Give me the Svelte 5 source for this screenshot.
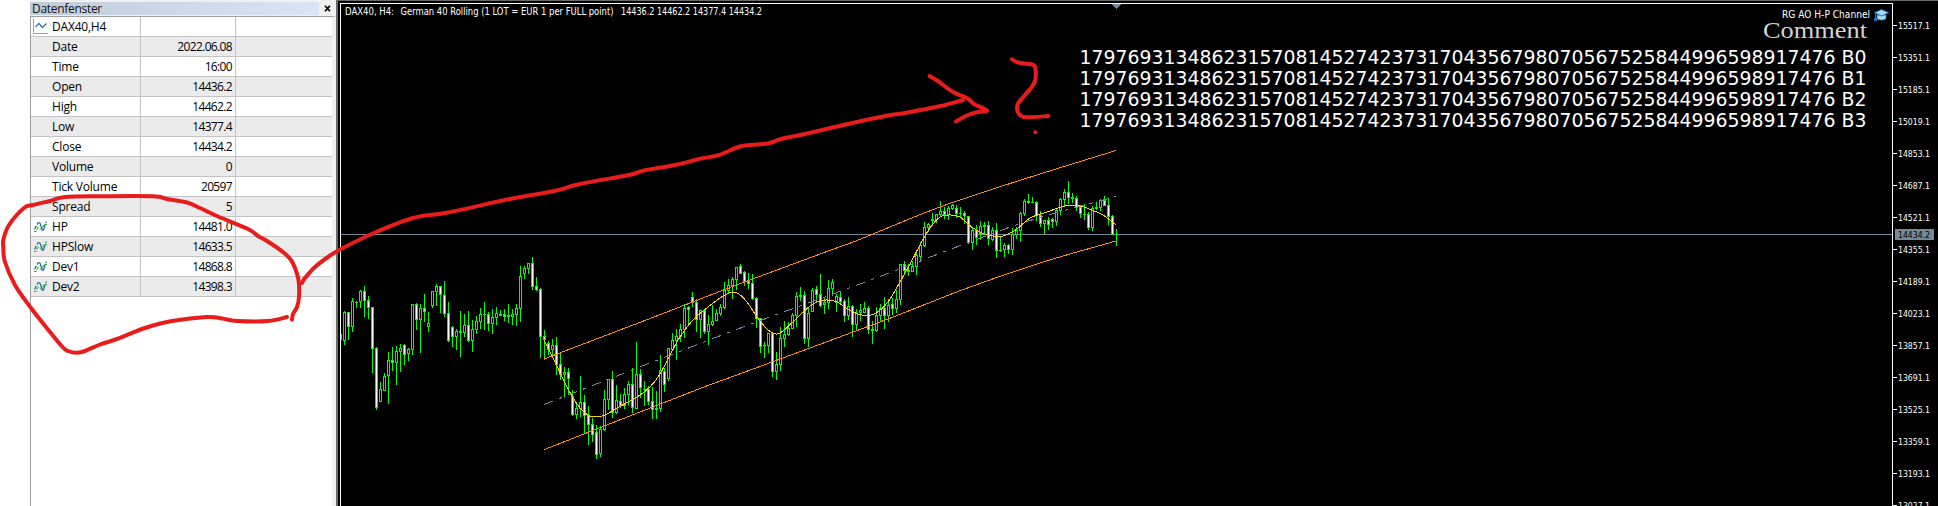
<script lang="ts">
  type Point = [number, number];
  // high, body top, body bottom, low, rising (1) or falling (0)
  type Candle = [number, number, number, number, number];

  const rows = [
    { label: 'Date', value: '2022.06.08' },
    { label: 'Time', value: '16:00' },
    { label: 'Open', value: '14436.2' },
    { label: 'High', value: '14462.2' },
    { label: 'Low', value: '14377.4' },
    { label: 'Close', value: '14434.2' },
    { label: 'Volume', value: '0' },
    { label: 'Tick Volume', value: '20597' },
    { label: 'Spread', value: '5' },
    { label: 'HP', value: '14481.0', indicator: true },
    { label: 'HPSlow', value: '14633.5', indicator: true },
    { label: 'Dev1', value: '14868.8', indicator: true },
    { label: 'Dev2', value: '14398.3', indicator: true },
  ];

  // One label every 32px, 166 points apart.
  const ticks = Array.from({ length: 16 }, (_, i) => ({
    y: 25 + i * 32,
    text: (15517.1 - i * 166).toFixed(1),
  }));

  const hugeNumber = '179769313486231570814527423731704356798070567525844996598917476';
  const buffers = ['B0', 'B1', 'B2', 'B3'];

  const FIRST_X = 344;
  const STEP = 4;

  const candles: Candle[] = [
    [311, 312, 340, 344, 1], [312, 312, 326, 339, 0], [298, 301, 326, 331, 1], [301, 302, 302, 307, 1],
    [290, 291, 301, 307, 1], [286, 291, 300, 316, 0], [296, 300, 307, 318, 0], [307, 307, 348, 372, 0],
    [347, 348, 407, 409, 0], [382, 389, 401, 401, 1], [373, 376, 390, 390, 1], [352, 360, 375, 403, 1],
    [347, 360, 362, 370, 0], [346, 351, 362, 384, 1], [344, 348, 351, 371, 1], [344, 345, 354, 364, 0],
    [348, 349, 353, 360, 1], [304, 304, 349, 354, 1], [303, 304, 319, 329, 0], [304, 308, 319, 352, 1],
    [294, 308, 311, 321, 0], [312, 323, 326, 331, 1], [291, 291, 305, 307, 1], [284, 286, 291, 305, 1],
    [286, 286, 294, 312, 0], [281, 295, 313, 316, 0], [302, 313, 340, 341, 0], [326, 327, 336, 346, 0],
    [329, 331, 336, 349, 1], [311, 331, 332, 356, 1], [314, 325, 332, 336, 1], [311, 325, 340, 341, 0],
    [320, 329, 340, 351, 1], [316, 321, 329, 333, 1], [308, 314, 321, 328, 1], [302, 314, 314, 329, 1],
    [312, 314, 323, 330, 0], [309, 317, 323, 333, 1], [307, 313, 317, 324, 1], [310, 314, 315, 315, 0],
    [309, 314, 316, 320, 0], [304, 315, 316, 322, 1], [309, 314, 316, 324, 1], [304, 308, 314, 325, 1],
    [266, 276, 308, 321, 1], [266, 268, 273, 278, 1], [263, 263, 268, 273, 1], [257, 263, 286, 289, 0],
    [277, 286, 289, 290, 0], [288, 289, 336, 357, 0], [330, 336, 339, 359, 0], [341, 343, 349, 354, 0],
    [339, 345, 349, 357, 1], [337, 345, 364, 374, 0], [353, 364, 374, 379, 0], [367, 372, 374, 396, 1],
    [368, 372, 378, 393, 0], [390, 396, 414, 415, 0], [403, 408, 414, 418, 1], [376, 402, 408, 416, 1],
    [395, 402, 415, 432, 0], [406, 415, 424, 444, 0], [418, 424, 434, 441, 0], [425, 432, 454, 458, 0],
    [426, 429, 453, 456, 1], [390, 399, 429, 430, 1], [379, 379, 399, 409, 1], [371, 379, 412, 417, 0],
    [385, 400, 412, 413, 1], [394, 401, 405, 407, 0], [388, 394, 405, 408, 1], [381, 384, 394, 404, 1],
    [368, 384, 407, 412, 0], [342, 374, 408, 408, 1], [369, 374, 387, 397, 0], [381, 389, 389, 405, 1],
    [386, 389, 401, 404, 0], [387, 401, 409, 418, 0], [391, 408, 409, 418, 1], [355, 370, 408, 411, 1],
    [368, 371, 384, 391, 0], [348, 348, 378, 380, 1], [333, 340, 349, 349, 1], [329, 336, 340, 359, 1],
    [324, 329, 336, 341, 1], [304, 308, 329, 337, 1], [306, 307, 309, 323, 0], [292, 297, 302, 306, 0],
    [299, 302, 319, 331, 0], [310, 310, 319, 337, 1], [309, 310, 331, 333, 0], [315, 324, 331, 344, 1],
    [305, 321, 324, 325, 1], [309, 313, 320, 320, 1], [304, 307, 313, 315, 1], [282, 290, 307, 308, 1],
    [279, 285, 290, 293, 1], [277, 279, 285, 298, 1], [267, 267, 279, 289, 1], [264, 266, 273, 273, 0],
    [271, 272, 281, 285, 0], [273, 281, 283, 288, 0], [274, 283, 298, 299, 0], [297, 298, 318, 327, 0],
    [318, 318, 346, 352, 0], [342, 345, 345, 357, 1], [333, 333, 345, 352, 1], [332, 333, 371, 376, 0],
    [352, 364, 371, 379, 1], [327, 338, 364, 370, 1], [321, 334, 338, 346, 1], [322, 328, 334, 335, 1],
    [313, 315, 328, 328, 1], [292, 296, 315, 326, 1], [287, 295, 296, 300, 1], [291, 295, 338, 343, 0],
    [308, 313, 338, 346, 1], [288, 290, 311, 311, 1], [286, 289, 294, 302, 0], [274, 294, 305, 306, 0],
    [297, 302, 304, 313, 1], [280, 288, 302, 308, 1], [279, 282, 288, 295, 1], [294, 296, 302, 311, 1],
    [292, 297, 301, 302, 0], [299, 301, 315, 321, 0], [297, 306, 315, 319, 1], [305, 306, 324, 336, 0],
    [309, 313, 324, 330, 1], [304, 310, 312, 320, 1], [302, 308, 312, 312, 1], [306, 308, 329, 333, 0],
    [321, 329, 330, 343, 1], [307, 315, 330, 331, 1], [304, 308, 315, 320, 1], [297, 308, 315, 328, 0],
    [299, 305, 315, 321, 1], [298, 304, 308, 314, 0], [290, 299, 308, 312, 1], [264, 264, 299, 304, 1],
    [261, 264, 270, 274, 0], [264, 270, 271, 275, 1], [261, 266, 271, 271, 1], [251, 255, 266, 274, 1],
    [242, 245, 256, 261, 1], [222, 227, 245, 246, 1], [223, 224, 227, 231, 1], [213, 219, 220, 225, 1],
    [214, 214, 219, 222, 1], [201, 211, 214, 215, 1], [207, 211, 214, 218, 0], [206, 208, 214, 219, 1],
    [204, 205, 208, 209, 1], [205, 208, 213, 217, 0], [207, 213, 213, 217, 1], [211, 213, 215, 223, 0],
    [216, 216, 242, 243, 0], [227, 230, 242, 249, 1], [225, 230, 237, 244, 0], [221, 226, 233, 239, 1],
    [222, 225, 226, 234, 1], [221, 225, 238, 244, 0], [227, 230, 239, 240, 1], [223, 230, 250, 257, 0],
    [237, 250, 250, 251, 1], [243, 245, 249, 256, 1], [244, 245, 249, 253, 0], [228, 234, 249, 254, 1],
    [227, 230, 234, 238, 1], [212, 213, 230, 241, 1], [199, 201, 213, 215, 1], [194, 201, 202, 203, 1],
    [197, 202, 202, 202, 1], [201, 202, 215, 220, 0], [211, 215, 223, 226, 0], [220, 220, 223, 233, 1],
    [217, 220, 224, 229, 0], [218, 219, 221, 227, 0], [209, 210, 221, 225, 1], [198, 199, 210, 214, 1],
    [189, 192, 199, 205, 1], [181, 192, 197, 203, 0], [193, 197, 198, 202, 1], [196, 198, 207, 210, 0],
    [205, 207, 213, 217, 0], [204, 214, 214, 219, 1], [212, 214, 227, 229, 0], [206, 208, 227, 230, 1],
    [202, 207, 208, 209, 1], [199, 200, 207, 210, 1], [196, 200, 205, 205, 0], [198, 205, 216, 224, 0],
    [215, 216, 234, 234, 0], [229, 234, 234, 245, 1],
  ];

  const upper: Point[] = [[544, 359], [660, 314.7], [730, 287.5], [831, 250], [860, 239.3], [940, 207], [1020, 180.3], [1116, 150.5]];
  const middle: Point[] = [[544, 404.5], [730, 332], [860, 284], [960, 245.7], [1030, 220.5], [1116, 196.5]];
  const lower: Point[] = [[544, 449.7], [698, 389.3], [730, 377.5], [880, 322], [964, 289.3], [1040, 263], [1116, 241]];

  const hp: Point[] = [
    [544, 340], [555, 362], [568, 389], [580, 408], [588, 415], [595, 417], [605, 415], [617, 408],
    [637, 397], [650, 387], [660, 374], [670, 355], [680, 337], [692, 321], [703, 311], [720, 298],
    [727, 294], [732, 292], [739, 294], [747, 302], [757, 317], [767, 329], [776, 334], [783, 331],
    [797, 318], [810, 306], [818, 301.5], [827, 300], [837, 302], [853, 312], [868, 315.5], [879, 311],
    [888, 302], [896, 289], [910, 264], [920, 245], [930, 228], [940, 217], [950, 215], [960, 217],
    [973, 228], [988, 235], [1003, 236], [1017, 229], [1030, 218], [1047, 212], [1067, 205.5],
    [1080, 206], [1093, 210.5], [1103, 215], [1116, 225],
  ];

  const loop: Point[] = [
    [287, 317], [268, 321], [237, 321], [222, 318.5], [207, 317], [172, 321], [145, 328], [117, 339],
    [100, 344.5], [85, 351], [77, 352.7], [68, 351], [63, 347.5], [50, 332], [31, 308], [15, 285],
    [5, 262], [3.3, 247], [3.5, 239], [9, 225], [24, 208], [33, 205], [50, 201], [65, 197],
    [100, 196.3], [153, 196.3], [167, 199], [187, 202.5], [200, 208], [218, 216.5], [248, 229],
    [258, 236], [267, 241], [283, 252], [291, 260], [295, 268], [298.5, 280], [299, 297],
    [297, 307], [293, 314], [292, 319.5],
  ];
  const arrow: Point[] = [
    [302, 283], [305, 278], [315, 267], [328, 257], [341, 249], [374, 233], [413, 218], [448, 212.5],
    [510, 199], [554, 191], [580, 184], [629, 175], [644, 170.5], [675, 165], [699, 159], [719, 155],
    [741, 146.3], [768, 143.5], [781, 139], [805, 134], [858, 121.7], [891, 115], [902, 113.5],
    [941, 106], [963, 100],
  ];
  const arrowHead: Point[] = [[929.5, 76], [938, 81], [953, 92], [967, 98], [974, 104], [987, 110.5], [978, 112], [968, 115], [956, 121.5]];
  const question: Point[] = [
    [1012, 59.3], [1018, 62.5], [1032, 64.5], [1035.3, 68], [1035.3, 80], [1031, 88], [1019, 102],
    [1017, 108], [1019, 114], [1026, 117.3], [1048.5, 116],
  ];

  // Catmull-Rom through the points, written as cubic segments.
  function smooth(pts: Point[]) {
    let d = `M${pts[0][0]} ${pts[0][1]}`;
    for (let i = 0; i < pts.length - 1; i++) {
      const p0 = pts[i - 1] ?? pts[i];
      const p1 = pts[i];
      const p2 = pts[i + 1];
      const p3 = pts[i + 2] ?? p2;
      const c = [
        p1[0] + (p2[0] - p0[0]) / 6,
        p1[1] + (p2[1] - p0[1]) / 6,
        p2[0] - (p3[0] - p1[0]) / 6,
        p2[1] - (p3[1] - p1[1]) / 6,
      ].map((n) => n.toFixed(1));
      d += ` C${c.join(' ')} ${p2[0]} ${p2[1]}`;
    }
    return d;
  }
</script>

<div class="terminal">
  <aside class="panel">
    <header class="panel__head">
      <span class="panel__title">Datenfenster</span>
      <button class="panel__close" type="button" aria-label="Schließen">
        <svg width="7" height="7" viewBox="0 0 7 7"><path d="M1 .7 6 6.3M6 .7 1 6.3" stroke="#000" stroke-width="1.7" /></svg>
      </button>
    </header>

    <div class="table">
      <div class="row">
        <div class="cell cell--name">
          <span class="icon">
            <svg width="15" height="15" viewBox="0 0 15 15" fill="none">
              <path d="M.5 0v14.5H15" stroke="#a0a0a0" />
              <path d="M2.5 8 6 4.5l3.5 4 4-4" stroke="#2d76b5" stroke-width="1.2" />
            </svg>
          </span>
          DAX40,H4
        </div>
        <div class="cell cell--value"></div>
        <div class="cell"></div>
      </div>
      {#each rows as row}
        <div class="row">
          <div class="cell cell--name">
            <span class="icon">
              {#if row.indicator}
                <svg width="15" height="12" viewBox="0 0 15 12" fill="none">
                  <path d="M1 10.5h2.5M3.5 8.5 5.5 6M2 5.5h2M7.5 8.5l2-2M9.5 5.500l2-1.500M11.500 3.500H14" stroke="#25b03c" stroke-width="1.2" />
                  <path d="M1.5 8.500 3 5.500M4 3.500C5 1 7 1 7.500 3.500L9 8.500C9.500 10 10.500 9.500 11 7.500L12 4M12.500 2l1-1.500" stroke="#2668a0" stroke-width="1.2" />
                </svg>
              {/if}
            </span>
            {row.label}
          </div>
          <div class="cell cell--value">{row.value}</div>
          <div class="cell"></div>
        </div>
      {/each}
    </div>
  </aside>

  <main class="chart">
    <svg width="1602" height="506" viewBox="336 0 1602 506">
      <g shape-rendering="crispEdges">
        <rect x="336" y="0" width="1602" height="1" fill="#696969" />
        <rect x="336" y="0" width="2" height="506" fill="#696969" />
        <path d="M340.5 506V3.5H1892.5V506" fill="none" stroke="#fff" />
        <path d="M1111 4h10l-5 5z" fill="#778899" />
        <rect x="341" y="234" width="1551" height="1" fill="#778899" />

        <rect x="341" y="334" width="1" height="6" fill="#0f0" />
        {#each candles as [high, top, bottom, low, up], i}
          {@const x = FIRST_X + i * STEP}
          <rect {x} y={high} width="1" height={low - high + 1} fill="#0f0" />
          <rect x={x - 1} y={top} width="3" height={bottom - top + 1} fill="#0f0" />
          {#if bottom - top > 1}
            <rect {x} y={top + 1} width="1" height={bottom - top - 1} fill={up ? '#000' : '#fff'} />
          {/if}
        {/each}

        <g fill="none">
          <path d={smooth(middle)} stroke="#778899" stroke-dasharray="9.6 6.45 3.2 6.45" />
          <path d={smooth(upper)} stroke="#ff8c00" />
          <path d={smooth(lower)} stroke="#ff8c00" />
          <path d={smooth(hp)} stroke="#ffd700" />
        </g>
      </g>

      <g class="small">
        <text x="345" y="14.5" textLength="49" lengthAdjust="spacingAndGlyphs">DAX40, H4:</text>
        <text x="400.5" y="14.5" textLength="213" lengthAdjust="spacingAndGlyphs">German 40 Rolling (1 LOT = EUR 1 per FULL point)</text>
        <text x="621" y="14.5" textLength="141" lengthAdjust="spacingAndGlyphs">14436.2 14462.2 14377.4 14434.2</text>
        <text x="1782" y="18" textLength="88" lengthAdjust="spacingAndGlyphs">RG AO H-P Channel</text>
      </g>

      <!-- graduation cap: marks an expert indicator -->
      <path d="M1877 15v3.5c1.5 2 7.5 2 9 0V15z" fill="#a5d8fb" stroke="#1f7fc4" stroke-width=".8" />
      <path d="M1874.5 12.7 1881.5 9.5 1888.5 12.7 1881.5 16z" fill="#a5d8fb" stroke="#1f7fc4" />
      <path d="M1875.5 13v6" stroke="#1f7fc4" />
      <rect x="1874" y="18" width="3" height="3" fill="#1f6fae" />

      <text class="comment" x="1763" y="38" textLength="104" lengthAdjust="spacingAndGlyphs">Comment</text>
      {#each buffers as name, i}
        <text class="big" x="1079.5" y={64 + i * 21} textLength="787" lengthAdjust="spacingAndGlyphs">{hugeNumber} {name}</text>
      {/each}

      {#each ticks as tick}
        <rect x="1893" y={tick.y} width="4" height="1" fill="#fff" />
        <text class="tick" x="1898" y={tick.y + 4} textLength="32" lengthAdjust="spacingAndGlyphs">{tick.text}</text>
      {/each}
      <rect x="1895" y="229" width="39" height="11" fill="#778899" />
      <text class="tick tick--last" x="1898" y="238" textLength="32" lengthAdjust="spacingAndGlyphs">14434.2</text>
    </svg>
  </main>

  <svg class="ink" width="1938" height="506" viewBox="0 0 1938 506">
    <path d={smooth(loop)} />
    <path d={smooth(arrow)} />
    <path d={smooth(arrowHead)} />
    <path d={smooth(question)} />
    <circle cx="1035.3" cy="132.3" r="2" />
  </svg>
</div>

<style>
  .terminal {
    position: relative;
    display: flex;
    width: 1938px;
    height: 506px;
    overflow: hidden;
    background: #fff;
  }
  .panel {
    box-sizing: border-box;
    width: 336px;
    flex: none;
    display: flex;
    flex-direction: column;
    padding-left: 30px;
    font-family: 'Open Sans', 'Noto Sans', sans-serif;
    font-size: 12px;
    color: #000;
  }
  .panel__head {
    display: flex;
    height: 16px;
    background: #f0f0f0;
  }
  .panel__title {
    box-sizing: border-box;
    width: 289px;
    height: 13px;
    margin-top: 2px;
    padding-left: 2px;
    line-height: 13px;
    letter-spacing: -0.3px;
    background: linear-gradient(90deg, #bfcddb, #d8e5f2);
    color: #111;
  }
  .panel__close {
    display: flex;
    align-items: center;
    justify-content: center;
    width: 16px;
    height: 16px;
    padding: 1px 0 0;
    border: 0;
    background: none;
  }
  .table {
    flex: 1;
    width: 301px;
    border-top: 1px solid #a0a0a0;
    border-left: 1px solid #a0a0a0;
    border-right: 4px solid #f0f0f0;
  }
  .row {
    display: grid;
    grid-template-columns: 110px 95px 1fr;
    height: 20px;
    box-sizing: border-box;
    border-bottom: 1px solid #c3c3c3;
    line-height: 19px;
  }
  .row:nth-child(even) {
    background: #ebebeb;
  }
  .cell {
    box-sizing: border-box;
    white-space: nowrap;
  }
  .cell--name {
    display: flex;
    border-right: 1px solid #c3c3c3;
    letter-spacing: -0.2px;
  }
  .cell--value {
    padding-right: 3px;
    border-right: 1px solid #c3c3c3;
    text-align: right;
    letter-spacing: -0.65px;
  }
  .icon {
    display: flex;
    align-items: center;
    width: 21px;
    padding-left: 2px;
    box-sizing: border-box;
    flex: none;
  }
  .icon svg {
    flex: none;
  }
  .chart {
    flex: 1;
    background: #000;
  }
  .chart svg {
    display: block;
  }
  text {
    fill: #fff;
  }
  .small {
    font: 10.5px 'DejaVu Sans Condensed', 'DejaVu Sans', sans-serif;
  }
  .tick {
    font: 9.5px 'DejaVu Sans Condensed', 'DejaVu Sans', sans-serif;
  }
  .tick--last {
    fill: #000;
  }
  .comment {
    font: 24px 'Liberation Serif', serif;
    fill: #d3d3d3;
  }
  .big {
    font: 18.9px 'DejaVu Sans', sans-serif;
  }
  .ink {
    position: absolute;
    inset: 0;
    pointer-events: none;
  }
  .ink path {
    fill: none;
    stroke: #e81c1a;
    stroke-width: 4;
    stroke-linecap: round;
    stroke-linejoin: round;
  }
  .ink circle {
    fill: #e81c1a;
  }
</style>
